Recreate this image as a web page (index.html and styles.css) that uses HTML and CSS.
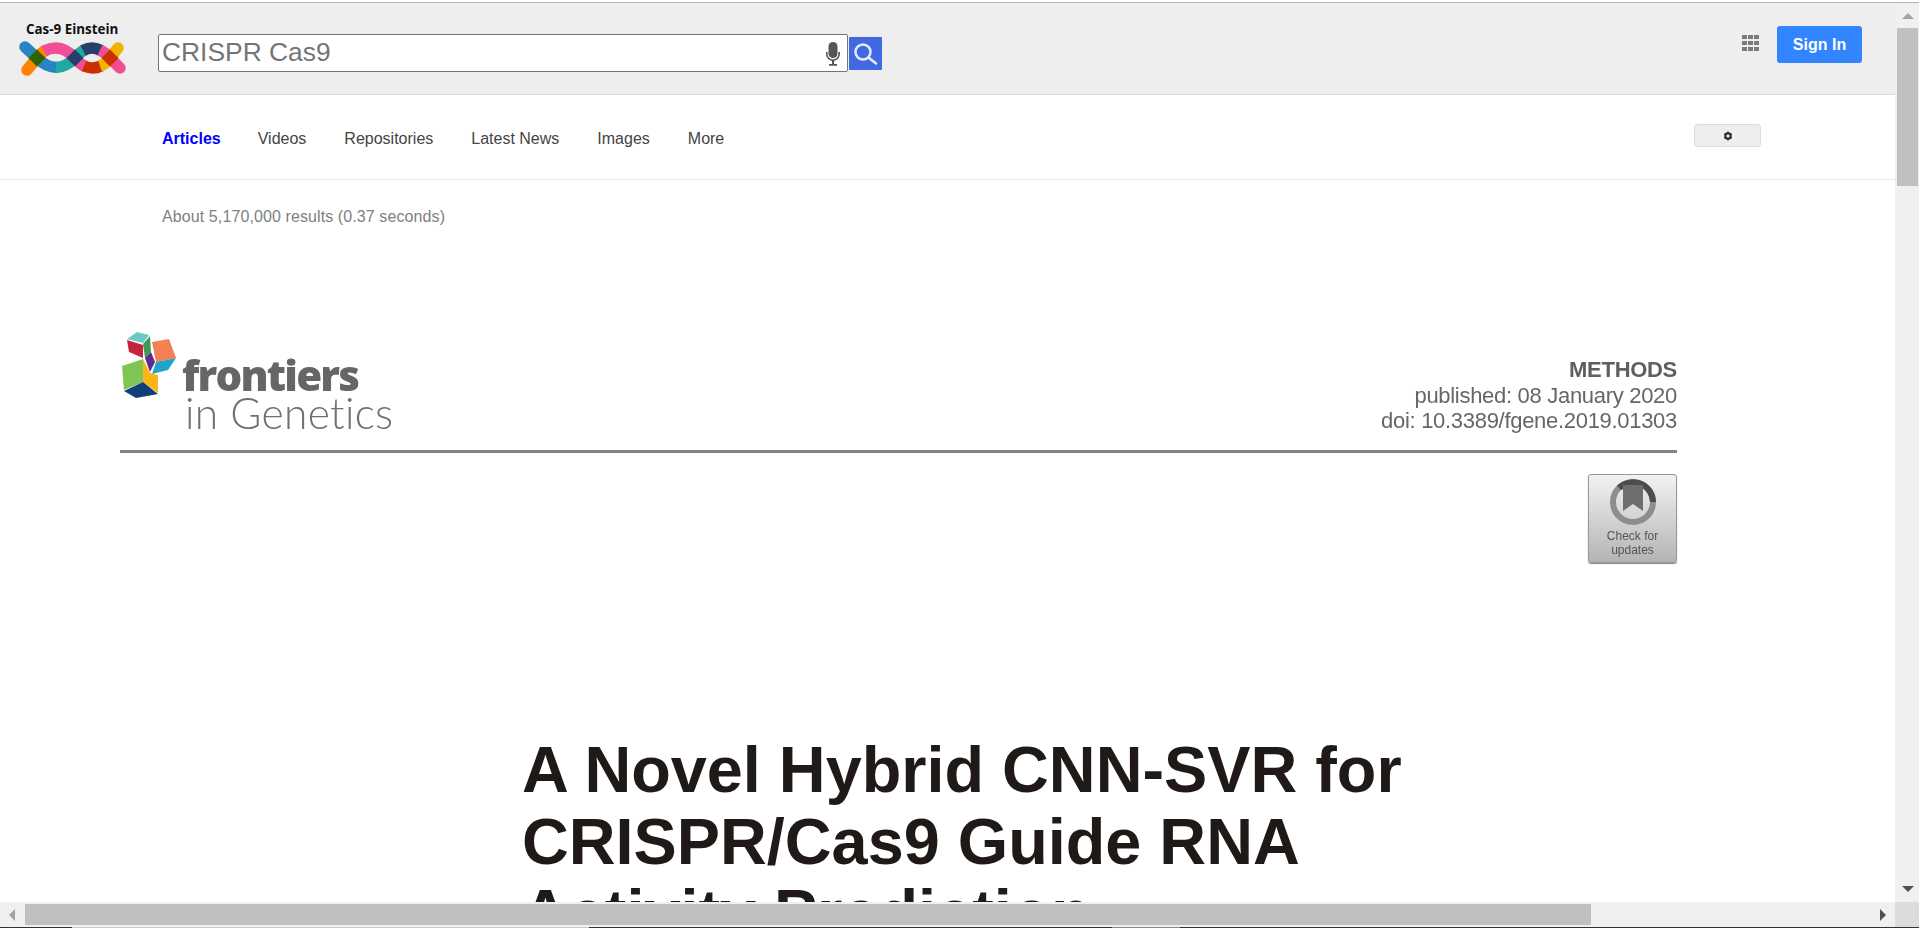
FILE: index.html
```html
<!DOCTYPE html>
<html lang="en">
<head>
<meta charset="utf-8">
<title>CRISPR Cas9 - Cas-9 Einstein</title>
<link rel="stylesheet" href="styles.css">
</head>
<body>
<div class="shell">
  <div class="top-strip"></div>
  <div class="viewport">
    <header class="topbar">
      <div class="brand">
        <div class="brand-name">Cas-9 Einstein</div>
        <svg class="brand-mark" width="110" height="36" viewBox="0 0 110 36" fill="none" stroke-linecap="butt" stroke-width="11.5">
          <path d="M8 7 L20 18" stroke="#2a84c4" stroke-linecap="round"/>
          <path d="M10 30 L20 18" stroke="#ff8200" stroke-linecap="round"/>
          <path d="M20 18 Q29.5 27.5 40 27.5" stroke="#2a84c4"/>
          <path d="M39 27.5 Q48.5 27.5 58 18" stroke="#1fa9a0"/>
          <path d="M20 18 Q24 13 28 10.5" stroke="#ff8200"/>
          <path d="M27 11 Q33 8 39 8 Q48.5 8 58 18" stroke="#ee4f97"/>
          <path d="M58 18 Q62 13 67 10" stroke="#1fa9a0"/>
          <path d="M66 10.5 Q71 8 75 8 Q79 8 84 10.5" stroke="#27406b"/>
          <path d="M83 10 Q89 13 93 18" stroke="#ee4f97"/>
          <path d="M58 18 Q63 24 68 26.5" stroke="#ee4f97"/>
          <path d="M67 26 Q72 28 75.5 28 Q80 28 84 26" stroke="#cc2f00"/>
          <path d="M83 26 Q89 24 93 18" stroke="#efb400"/>
          <path d="M93 18 L101 8" stroke="#efb400" stroke-linecap="round"/>
          <path d="M93 18 L103 28" stroke="#f04f8f" stroke-linecap="round"/>
          <path d="M20 9.5 L28.5 18 L20 26.5 L11.5 18 Z" fill="#2f6300" stroke="none"/>
          <path d="M58 9.5 L66.5 18 L58 26.5 L49.5 18 Z" fill="#27406b" stroke="none"/>
          <path d="M93 9.5 L101.5 18 L93 26.5 L84.5 18 Z" fill="#cc2f00" stroke="none"/>
        </svg>
      </div>
      <form class="search">
        <div class="search-box">
          <span class="search-text">CRISPR Cas9</span>
          <svg class="mic" width="16" height="24" viewBox="0 0 16 24" fill="#555">
            <rect x="3.5" y="0" width="9" height="16" rx="4.5"/>
            <path d="M1 10h1.6v2a5.4 5.4 0 0 0 10.8 0v-2H15v2a7 7 0 0 1-6 6.9V22h3v1.7H4V22h3v-3.1A7 7 0 0 1 1 12z"/>
          </svg>
        </div>
        <div class="search-btn">
          <svg width="33" height="33" viewBox="0 0 33 33" fill="none" stroke="#e6ebfa" stroke-width="2.5" stroke-linecap="round">
            <circle cx="14" cy="15" r="7.5"/>
            <path d="M19.5 20.5 L27 26.5"/>
          </svg>
        </div>
      </form>
      <div class="top-actions">
        <div class="apps">
          <i></i><i></i><i></i><i></i><i></i><i></i><i></i><i></i><i></i>
        </div>
        <div class="signin">Sign In</div>
      </div>
    </header>
    <nav class="tabs">
      <a class="tab tab-active">Articles</a>
      <a class="tab">Videos</a>
      <a class="tab">Repositories</a>
      <a class="tab">Latest News</a>
      <a class="tab">Images</a>
      <a class="tab">More</a>
      <div class="settings">
        <svg width="10" height="10" viewBox="0 0 10 10">
          <circle cx="5" cy="5" r="2.7" fill="none" stroke="#222" stroke-width="2"/>
          <path d="M5 .6v1.6M5 7.8v1.6M1.2 2.8l1.4.8M7.4 6.4l1.4.8M1.2 7.2l1.4-.8M7.4 3.6l1.4-.8" stroke="#222" stroke-width="1.2"/>
        </svg>
      </div>
    </nav>
    <div class="stats">About 5,170,000 results (0.37 seconds)</div>
    <article class="paper">
      <div class="paper-head">
        <div class="journal">
          <svg class="journal-mark" width="60" height="70" viewBox="0 0 60 70">
            <polygon points="7,9 17,2 29,5 23,13" fill="#6bc8c4"/>
            <polygon points="7,10 23,15 23,28 9,22" fill="#c5243f"/>
            <polygon points="23,14 30,6 31,22 25,28" fill="#3f9a57"/>
            <polygon points="32,12 49,9 56,28 36,32" fill="#f58052"/>
            <polygon points="36,32 56,28 48,40 32,44" fill="#21a4c9"/>
            <polygon points="25,28 31,22 35,32 30,42" fill="#5a2d8c"/>
            <polygon points="2,36 23,29 23,52 4,60" fill="#80c454"/>
            <polygon points="23,29 30,43 38,45 38,63 23,52" fill="#fdb515"/>
            <polygon points="4,61 23,52 38,64 16,68" fill="#103e78"/>
          </svg>
          <div class="journal-name">
            <div class="journal-top">frontiers</div>
            <div class="journal-sub">in Genetics</div>
          </div>
        </div>
        <div class="paper-meta">
          <div class="meta-type">METHODS</div>
          <div class="meta-line">published: 08 January 2020</div>
          <div class="meta-line">doi: 10.3389/fgene.2019.01303</div>
        </div>
      </div>
      <div class="updates-row">
        <div class="updates">
          <svg width="50" height="50" viewBox="0 0 50 50">
            <circle cx="25" cy="25" r="20" fill="none" stroke="#8d8d8d" stroke-width="6"/>
            <path d="M11 11 A20 20 0 0 1 45 25" fill="none" stroke="#4c4c4c" stroke-width="6"/>
            <path d="M15 8h20v26l-10-7-10 7z" fill="#6e6e6e"/>
          </svg>
          <div class="updates-text">Check for<br>updates</div>
        </div>
      </div>
      <h1 class="paper-title">A Novel Hybrid CNN-SVR for<br>CRISPR/Cas9 Guide RNA<br>Activity Prediction</h1>
    </article>
  </div>
  <div class="vbar">
    <div class="arrow-up"></div>
    <div class="vthumb"></div>
    <div class="bar-fill"></div>
    <div class="arrow-down"></div>
  </div>
  <div class="hbar">
    <div class="arrow-left"></div>
    <div class="hthumb"></div>
    <div class="bar-fill"></div>
    <div class="arrow-right"></div>
  </div>
  <div class="corner"></div>
  <div class="bottom-strip"></div>
</div>
</body>
</html>
```
FILE: styles.css
```css
* { box-sizing: border-box; }
html, body { margin: 0; height: 100%; overflow: hidden; background: #fff; }
body { font-family: "Liberation Sans", Arial, sans-serif; }

.shell {
  width: 1919px;
  height: 928px;
  display: grid;
  grid-template-columns: 1895px 24px;
  grid-template-rows: 3px 899px 25px 1px;
}
.top-strip {
  grid-column: 1 / -1;
  background: linear-gradient(#fff 0, #fff 2px, #b5b5b5 2px);
}
.bottom-strip {
  grid-column: 1 / -1;
  background: linear-gradient(90deg, #333 72px, #ccc 72px, #ccc 589px, #333 589px, #333 1112px, #888 1112px, #888 1180px, #333 1180px);
}
.viewport { overflow: hidden; background: #fff; }

.topbar {
  height: 92px;
  background: #eee;
  border-bottom: 1px solid #dcdcdc;
  display: flex;
  align-items: flex-start;
}
.brand { width: 158px; padding: 18px 0 0 17px; flex: none; }
.brand-name {
  font-family: "Open Sans", sans-serif;
  font-weight: 700;
  font-size: 13.4px;
  line-height: 16px;
  color: #111;
  padding-left: 9px;
  white-space: nowrap;
}
.brand-mark { display: block; margin-top: 3px; }
.search { display: flex; align-items: flex-start; padding-top: 31px; }
.search-box {
  width: 690px;
  height: 38px;
  background: #fff;
  border: 1px solid #767676;
  border-radius: 2px;
  display: flex;
  align-items: center;
  justify-content: space-between;
  padding: 0 6px 2px 3px;
}
.search-text { font-size: 26.4px; color: #757575; }
.mic { margin-top: 4px; }
.search-btn {
  width: 33px;
  height: 33px;
  margin: 3px 0 0 1px;
  background: #4169e1;
  border-radius: 1px;
}
.search-btn svg { display: block; }
.top-actions {
  margin-left: auto;
  padding: 23px 33px 0 0;
  display: flex;
  align-items: flex-start;
  gap: 18px;
}
.apps {
  width: 17px;
  margin-top: 9px;
  display: grid;
  grid-template-columns: repeat(3, 5px);
  grid-auto-rows: 4px;
  gap: 2px 1px;
}
.apps i { background: #7a7a7a; display: block; }
.signin {
  width: 85px;
  height: 37px;
  background: #3385ff;
  border-radius: 3px;
  color: #fff;
  font-weight: 700;
  font-size: 16px;
  line-height: 37px;
  text-align: center;
}

.tabs {
  height: 85px;
  border-bottom: 1px solid #ebebeb;
  display: flex;
  align-items: center;
  padding: 4px 0 0 162px;
  font-size: 16px;
}
.tab { color: #444; margin-right: 38px; white-space: nowrap; }
.tab-active { color: #00f; font-weight: 700; margin-right: 37px; }
.settings {
  margin-left: auto;
  margin-right: 134px;
  margin-top: -7px;
  width: 67px;
  height: 23px;
  background: #eee;
  border: 1px solid #ddd;
  border-radius: 3px;
  display: flex;
  align-items: center;
  justify-content: center;
}

.stats {
  padding: 28px 0 0 162px;
  font-size: 16px;
  line-height: 18px;
  letter-spacing: 0.1px;
  color: #808080;
}

.paper { padding-left: 120px; width: 1677px; }
.paper-head {
  margin-top: 99px;
  height: 128px;
  border-bottom: 3px solid #848484;
  display: flex;
  justify-content: space-between;
  filter: blur(0.7px);
}
.journal { display: flex; align-items: flex-start; padding-top: 5px; }
.journal-name { margin: 26px 0 0 2px; }
.journal-top {
  font-family: "Open Sans", sans-serif;
  font-weight: 800;
  font-size: 42px;
  line-height: 38px;
  letter-spacing: -1.8px;
  color: #666;
}
.journal-sub {
  font-family: "Lato", sans-serif;
  font-weight: 300;
  font-size: 42.5px;
  line-height: 38px;
  letter-spacing: 0.3px;
  padding-left: 3px;
  color: #707070;
}
.paper-meta {
  text-align: right;
  padding-top: 32px;
  font-size: 22px;
  line-height: 25px;
  color: #666;
  letter-spacing: -0.3px;
}
.meta-type { font-weight: 700; font-size: 22px; line-height: 26px; color: #5f5f5f; }
.updates-row {
  display: flex;
  justify-content: flex-end;
  margin-top: 21px;
  filter: blur(0.6px);
}
.updates {
  width: 89px;
  height: 89px;
  border: 1px solid #999;
  border-radius: 3px;
  background: linear-gradient(#f2f2f2, #b4b4b4);
  display: flex;
  flex-direction: column;
  align-items: center;
  padding-top: 2px;
  box-shadow: 0 1px 1px #888;
}
.updates-text { font-size: 12px; line-height: 14px; color: #555; text-align: center; margin-top: 2px; }
.paper-title {
  margin: 171px 0 0 402px;
  font-size: 64.8px;
  line-height: 71.5px;
  font-weight: 700;
  color: #1f1a17;
  white-space: nowrap;
  filter: blur(0.7px);
}

.vbar { background: #f0f0f0; display: flex; flex-direction: column; align-items: center; padding: 0 1px 0 2px; }
.vthumb { width: 100%; height: 158px; background: #c0c0c0; flex: none; }
.bar-fill { flex: 1; }
.arrow-up {
  margin: 10px 0 9px;
  border-left: 6px solid transparent;
  border-right: 6px solid transparent;
  border-bottom: 6px solid #a3a3a3;
  height: 6px;
  width: 12px;
  flex: none;
}
.arrow-down {
  margin-bottom: 10px;
  border-left: 6px solid transparent;
  border-right: 6px solid transparent;
  border-top: 6px solid #505050;
  height: 6px;
  width: 12px;
  flex: none;
}
.hbar { background: #f0f0f0; display: flex; align-items: center; padding: 2px 0; }
.hthumb { width: 1566px; height: 100%; background: #c0c0c0; flex: none; margin-left: 10px; }
.arrow-left {
  margin-left: 9px;
  border-top: 6px solid transparent;
  border-bottom: 6px solid transparent;
  border-right: 6px solid #a3a3a3;
  width: 6px;
  height: 12px;
  flex: none;
}
.arrow-right {
  margin-right: 9px;
  border-top: 6px solid transparent;
  border-bottom: 6px solid transparent;
  border-left: 6px solid #505050;
  width: 6px;
  height: 12px;
  flex: none;
}
.corner { background: #dcdcdc; }
```
